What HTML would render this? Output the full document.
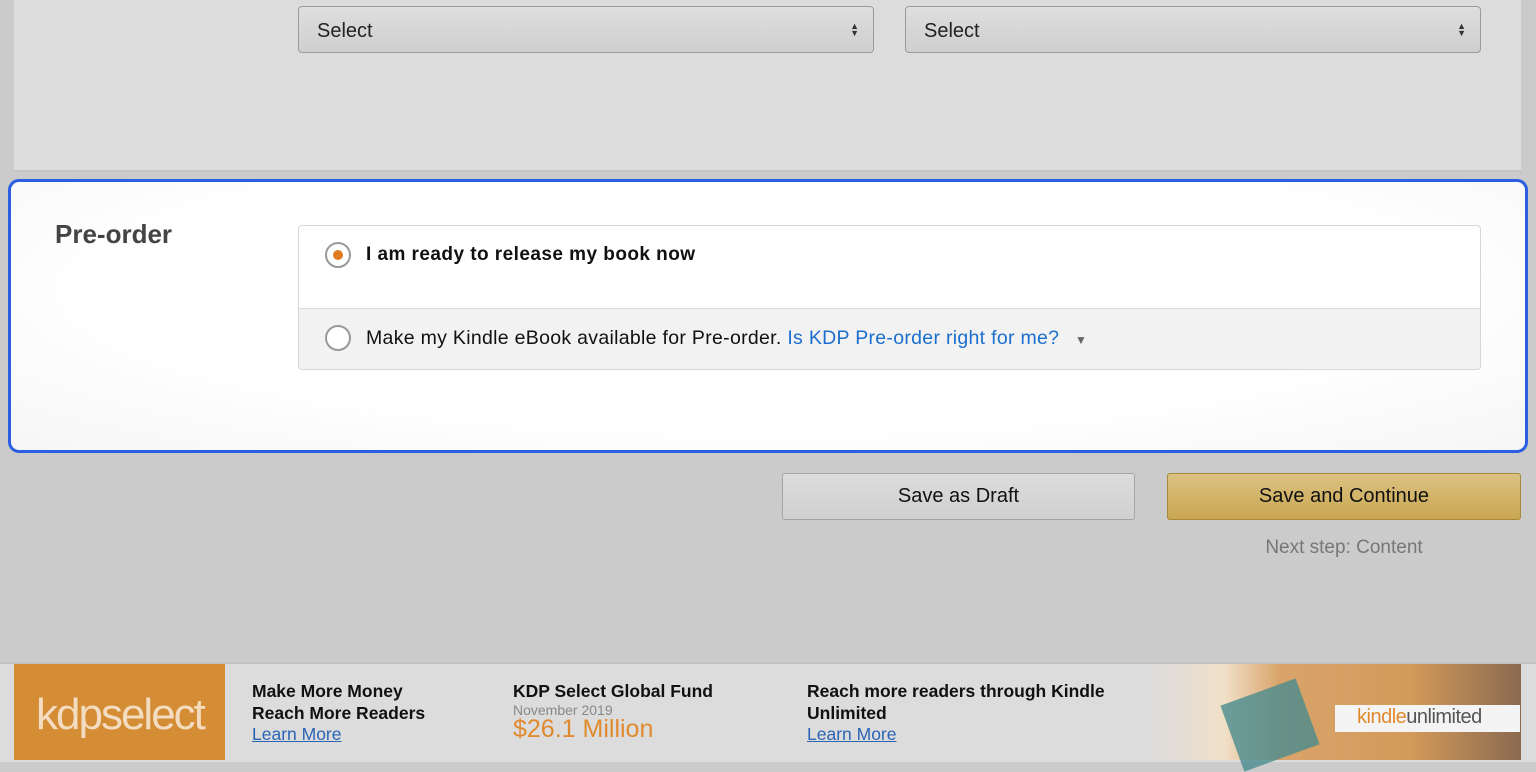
<!DOCTYPE html>
<html><head><style>
body{margin:0;width:1536px;height:760px;background:#cbcbcb;font-family:"Liberation Sans",Arial,sans-serif;position:relative;overflow:hidden}
.a{position:absolute}
.sel{top:6px;height:47px;border:1px solid #9a9a9a;border-radius:4px;background:linear-gradient(#dedede,#cfcfcf);font-size:20px;color:#222;box-sizing:border-box;padding:13px 18px}
.arr{position:absolute;right:14px;top:16px;font-size:9px;line-height:7px;color:#333}
.btn{top:473px;height:47px;border-radius:3px;box-sizing:border-box;font-size:20px;color:#111;text-align:center;line-height:45px}
</style></head><body>
<div class="a" style="left:14px;top:0;width:1507px;height:170px;background:#dcdcdc;border-bottom:2px solid #c4c4c4"></div>
<div class="a sel" style="left:298px;width:576px">Select<div class="arr">▲<br>▼</div></div>
<div class="a sel" style="left:905px;width:576px">Select<div class="arr">▲<br>▼</div></div>

<div class="a" style="left:8px;top:179px;width:1520px;height:274px;box-sizing:border-box;border:3px solid #2b5fe0;border-radius:11px;background:radial-gradient(ellipse at 50% 40%,#fff 60%,#f6f6f6)"></div>
<div class="a" style="left:55px;top:219px;font-size:26px;font-weight:bold;color:#444">Pre-order</div>
<div class="a" style="left:298px;top:225px;width:1183px;height:145px;box-sizing:border-box;border:1px solid #d6d6d6;border-radius:4px;background:#fff;overflow:hidden">
 <div class="a" style="left:0;top:82px;width:100%;height:62px;background:#f2f2f2;border-top:1px solid #dcdcdc"></div>
 <div class="a" style="left:26px;top:16px;width:26px;height:26px;border:2px solid #999;border-radius:50%;box-sizing:border-box;background:#fff"><div class="a" style="left:6px;top:6px;width:10px;height:10px;border-radius:50%;background:#e07b22"></div></div>
 <div class="a" style="left:67px;top:18px;font-size:19px;font-weight:bold;color:#111;letter-spacing:0.45px">I am ready to release my book now</div>
 <div class="a" style="left:26px;top:99px;width:26px;height:26px;border:2px solid #999;border-radius:50%;box-sizing:border-box;background:#fff"></div>
 <div class="a" style="left:67px;top:101px;font-size:19.5px;color:#111;white-space:nowrap;letter-spacing:0.3px">Make my Kindle eBook available for Pre-order. <span style="color:#1a6fcf">Is KDP Pre-order right for me?</span> <span style="color:#666;font-size:12px;margin-left:10px">▼</span></div>
</div>

<div class="a btn" style="left:782px;width:353px;border:1px solid #a5a5a5;background:linear-gradient(#dcdcdc,#d0d0d0)">Save as Draft</div>
<div class="a btn" style="left:1167px;width:354px;border:1px solid #a88a3a;background:linear-gradient(#dcc283,#c9a650)">Save and Continue</div>
<div class="a" style="left:1167px;top:537px;width:354px;text-align:center;font-size:19px;color:#777">Next step: Content</div>

<div class="a" style="left:0;top:662px;width:1536px;height:98px;background:#dcdcdc;border-top:2px solid #c2c2c2"></div>
<div class="a" style="left:14px;top:664px;width:211px;height:96px;background:#d48c35"></div>
<div class="a" style="left:36px;top:690px;font-size:44px;color:#f3dcc0;letter-spacing:-2px">kdp<span style="font-weight:300">select</span></div>
<div class="a" style="left:252px;top:681px;font-size:17.5px;font-weight:bold;color:#111;line-height:21.5px">Make More Money<br>Reach More Readers<br><span style="font-weight:normal;color:#2a64b5;text-decoration:underline">Learn More</span></div>
<div class="a" style="left:513px;top:681px;font-size:17.5px;font-weight:bold;color:#111;line-height:20px">KDP Select Global Fund</div>
<div class="a" style="left:513px;top:702px;font-size:14px;color:#888">November 2019</div>
<div class="a" style="left:513px;top:715px;font-size:25px;color:#e08a2e">$26.1 Million</div>
<div class="a" style="left:807px;top:681px;font-size:17.5px;font-weight:bold;color:#111;line-height:21.5px">Reach more readers through Kindle<br>Unlimited<br><span style="font-weight:normal;color:#2a64b5;text-decoration:underline">Learn More</span></div>
<div class="a" style="left:1150px;top:664px;width:371px;height:96px;background:linear-gradient(90deg,#dcdcdc 0%,#f0e0c8 20%,#d9a36a 35%,#d49a5a 70%,#8a6a50 100%)"></div>
<div class="a" style="left:1230px;top:690px;width:80px;height:70px;background:#4a8c8e;transform:rotate(-20deg);opacity:.8"></div>
<div class="a" style="left:1335px;top:705px;width:185px;height:27px;background:#f4f4f4"></div>
<div class="a" style="left:1357px;top:706px;font-size:20px;color:#555;letter-spacing:-0.5px"><span style="color:#e08a2e">kindle</span>unlimited</div>
<div class="a" style="left:1521px;top:664px;width:15px;height:96px;background:#dcdcdc"></div>
</body></html>
